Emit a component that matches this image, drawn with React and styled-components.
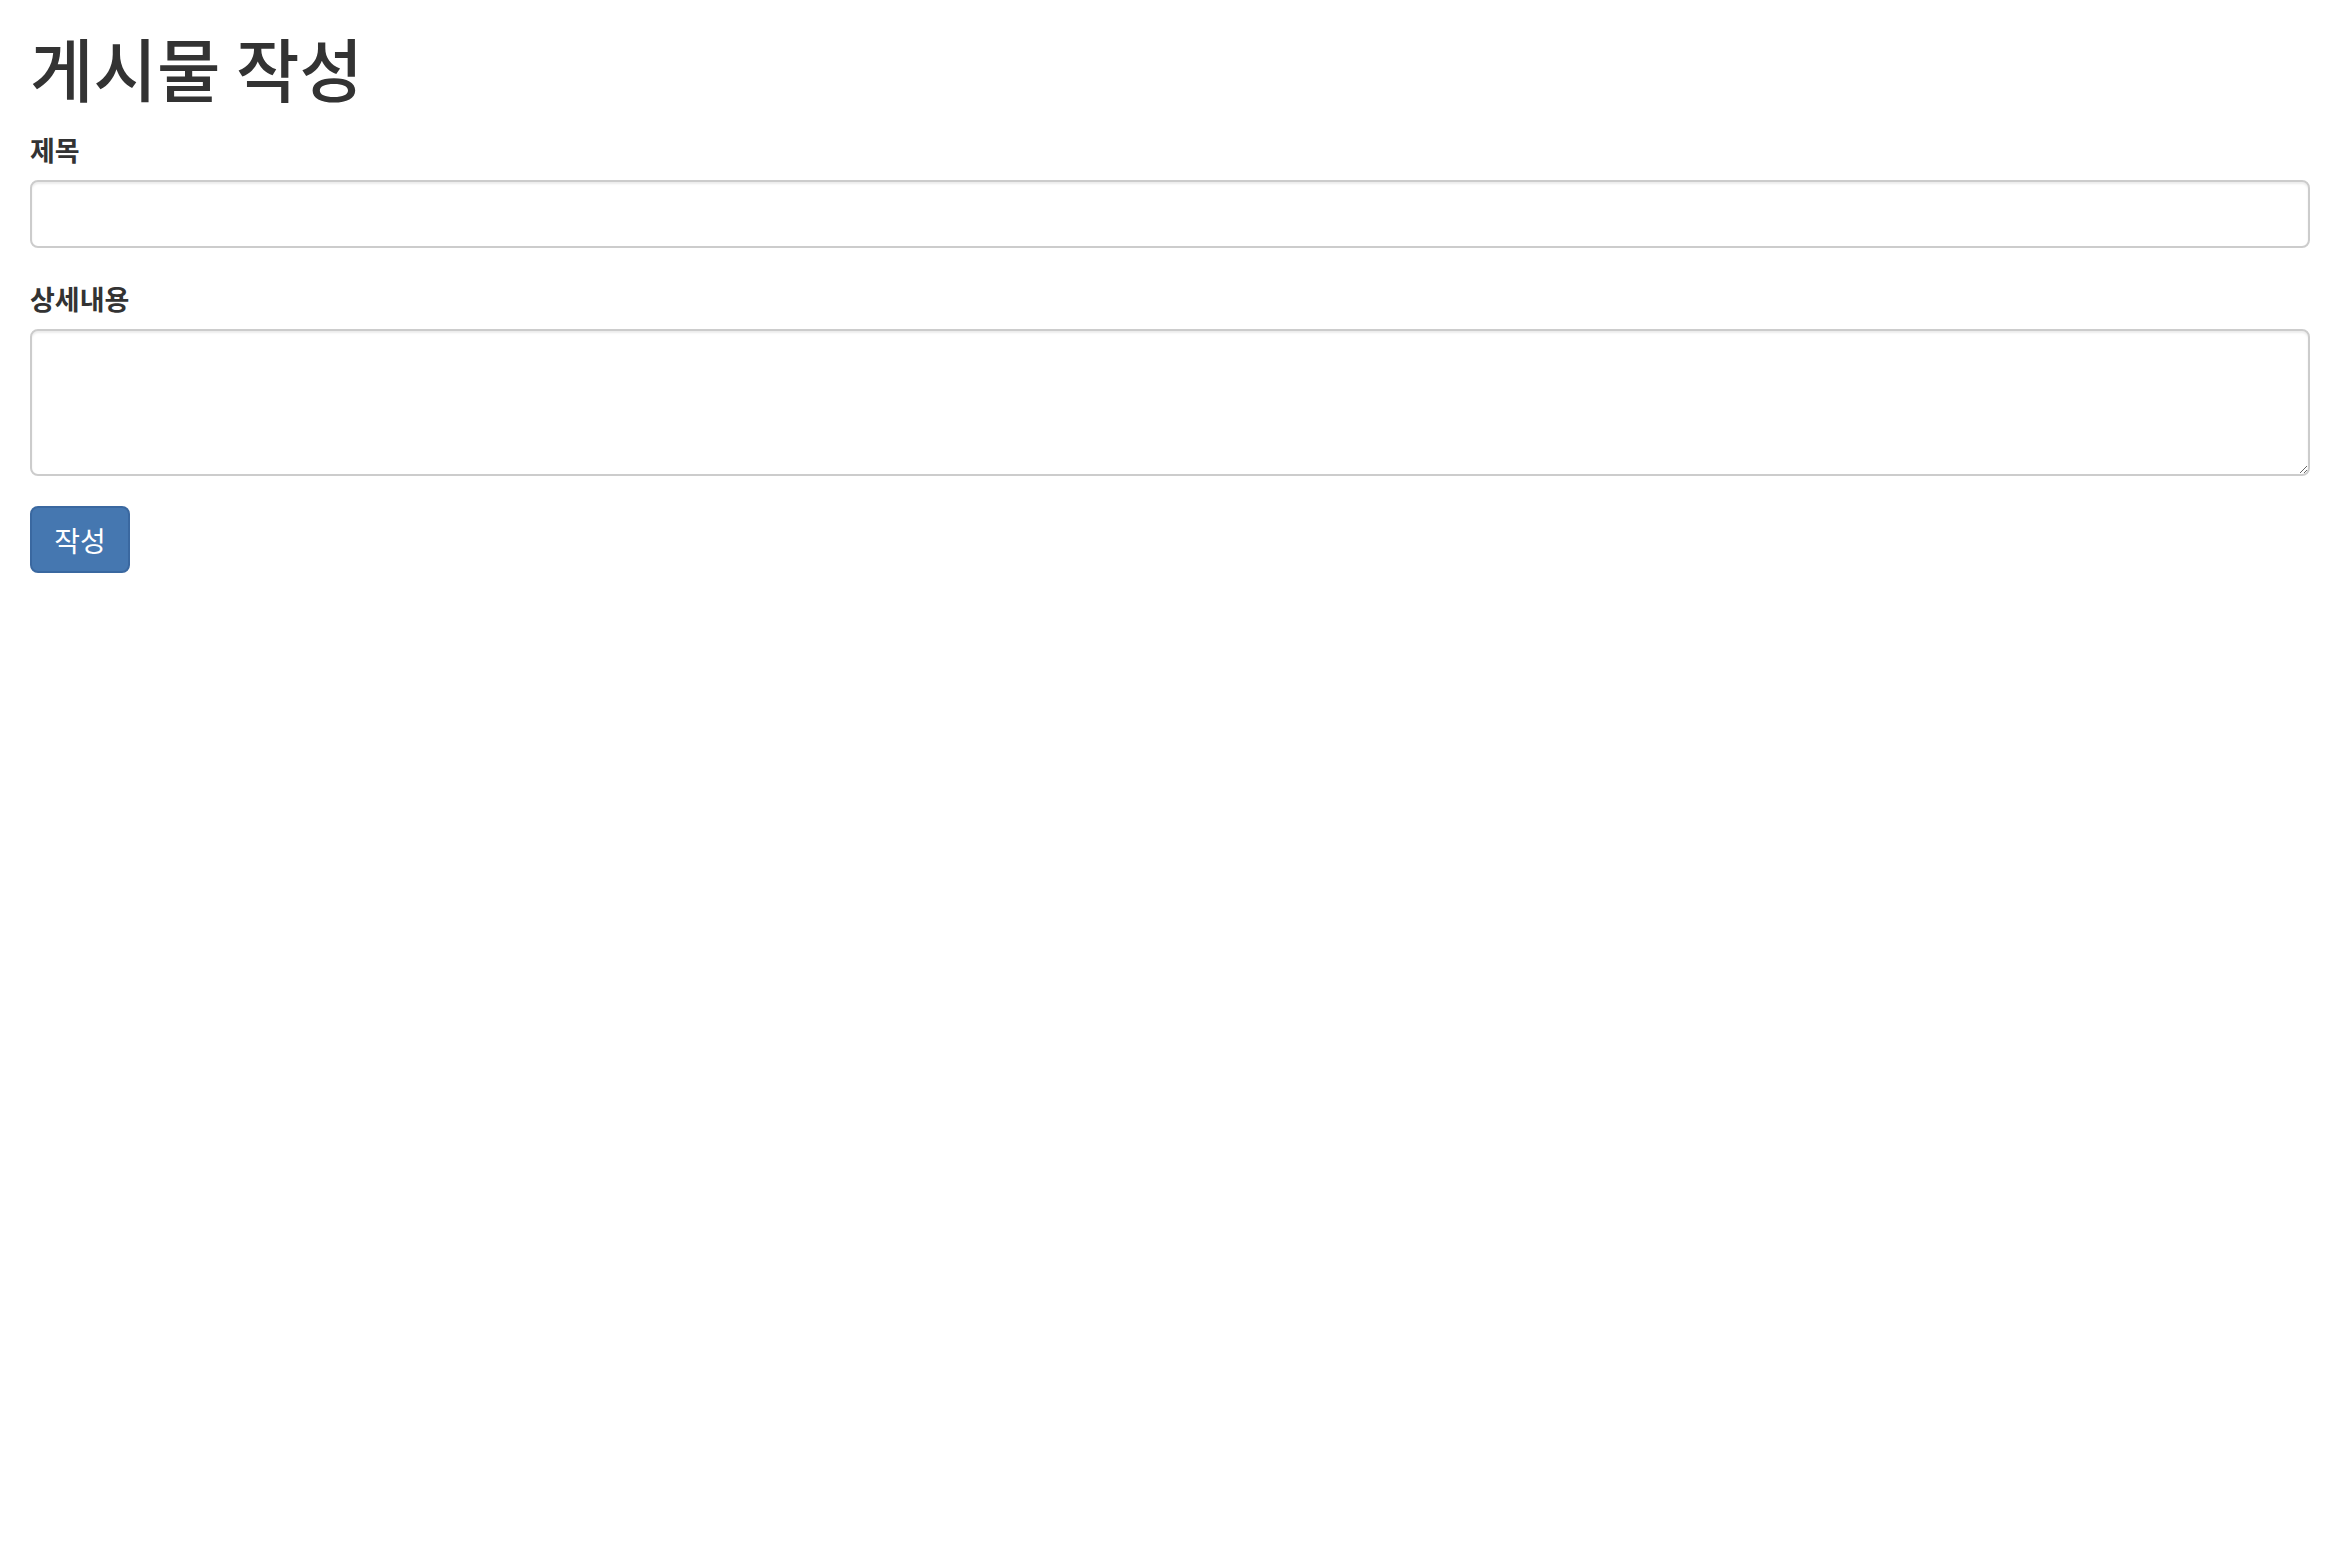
import styled, {createGlobalStyle} from "styled-components"

const Global = createGlobalStyle`
  html, body {
    margin: 0;
    padding: 0;
    background: #fff;
  }
  body {
    font-family: "Noto Sans CJK KR", "Noto Sans", sans-serif;
    font-size: 28px;
    line-height: 40px;
    color: #333;
  }
`

const Container = styled.div`
  padding: 0 32px 0 30px;
`

const Title = styled.h1`
  margin: 27px 0 22px;
  font-size: 69px;
  line-height: 80px;
  font-weight: 500;
  color: #333;
`

const Group = styled.div`
  margin-bottom: 30px;
`

const Label = styled.label`
  display: inline-block;
  margin-bottom: 10px;
  font-weight: 700;
  font-size: 27px;
  line-height: 40px;
`

const Field = styled.input`
  display: block;
  box-sizing: border-box;
  width: 100%;
  height: ${p => p.h || 68}px;
  padding: 12px 24px;
  font-family: inherit;
  font-size: 28px;
  color: #555;
  background: #fff;
  border: 2px solid #ccc;
  border-radius: 8px;
  box-shadow: inset 0 2px 2px rgba(0, 0, 0, 0.075);
  outline: none;
  resize: vertical;
`

const Button = styled.button`
  box-sizing: border-box;
  width: 100px;
  height: 67px;
  padding: 0;
  font-family: inherit;
  font-size: 28px;
  color: #fff;
  background: #4577b0;
  border: 2px solid #3a68a0;
  border-radius: 8px;
`

export default function App() {
  return (
    <Container>
      <Global />
      <Title>게시물 작성</Title>
      <form>
        <Group>
          <Label>제목</Label>
          <Field type="text" />
        </Group>
        <Group>
          <Label>상세내용</Label>
          <Field as="textarea" h={147} />
        </Group>
        <Button type="button">작성</Button>
      </form>
    </Container>
  )
}
